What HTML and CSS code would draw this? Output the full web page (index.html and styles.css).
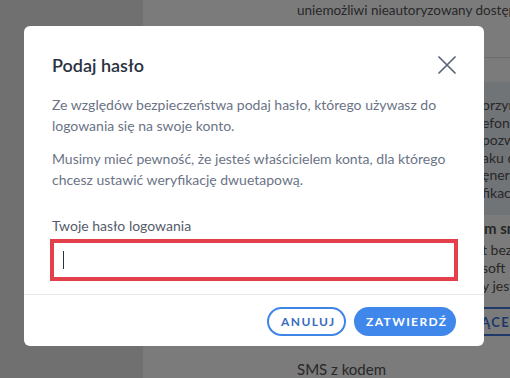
FILE: index.html
```html
<!DOCTYPE html>
<html lang="pl">
<head>
  <meta charset="UTF-8">
  <meta name="viewport" content="width=device-width, initial-scale=1">
  <title>Weryfikacja dwuetapowa</title>
  <link rel="stylesheet" href="styles.css">
</head>
<body>

  <div class="page">
    <aside class="sidebar"></aside>

    <main class="content">
      <div class="column">
        <p class="intro">uniemożliwi nieautoryzowany dostęp</p>
        <div class="section-line"></div>

        <div class="info-box">
          <p>orzyna</p>
          <p>efone</p>
          <p>pozwo</p>
          <p>aku d</p>
          <p>ęnero</p>
          <p>fikacji</p>
        </div>

        <h3 class="method-title">m sms</h3>
        <p class="method-text">t bezp</p>
        <p class="method-text">soft</p>
        <p class="method-text">y jest</p>
        <button class="outline-btn">ĄCEJ</button>

        <p class="sms-label">SMS z kodem</p>
      </div>
    </main>
  </div>

  <div class="overlay"></div>

  <div class="modal">
    <div class="modal-header">
      <h2>Podaj hasło</h2>
      <button class="close-btn" aria-label="Zamknij">
        <svg width="18" height="18" viewBox="0 0 18 18">
          <path d="M1 1 L17 17 M17 1 L1 17" stroke="#5a6377" stroke-width="1.7" fill="none" stroke-linecap="round"/>
        </svg>
      </button>
    </div>

    <div class="modal-body">
      <p>Ze względów bezpieczeństwa podaj hasło, którego używasz do logowania się na swoje konto.</p>
      <p>Musimy mieć pewność, że jesteś właścicielem konta, dla którego chcesz ustawić weryfikację dwuetapową.</p>

      <label for="password">Twoje hasło logowania</label>
      <div class="password-field">
        <input type="password" id="password">
        <span class="caret"></span>
      </div>
    </div>

    <div class="modal-footer">
      <button class="btn btn-secondary">Anuluj</button>
      <button class="btn btn-primary">Zatwierdź</button>
    </div>
  </div>

</body>
</html>
```

FILE: styles.css
```css
/* Global Styles */
body {
  margin: 0;
  width: 510px;
  height: 378px;
  overflow: hidden;
  font-family: Lato, "Liberation Sans", sans-serif;
  position: relative;
}

p {
  margin: 0;
}

/* Page behind the dialog */
.page {
  display: flex;
  height: 378px;
}

.sidebar {
  width: 143px;
  flex-shrink: 0;
  background-color: #e0e0e0;
}

.content {
  flex: 1;
  background-color: #f7f7f7;
  overflow: hidden;
}

.column {
  padding-left: 154px;
  width: 420px;
  color: #505050;
  font-size: 14px;
}

.intro {
  font-size: 13.5px;
  line-height: 20px;
  white-space: nowrap;
}

.section-line {
  margin-top: 37px;
  border-top: 1px solid #dcdcdc;
  margin-left: -154px;
}

.info-box {
  margin-top: 24px;
  margin-left: -154px;
  padding: 14px 0 14px 339px;
  background-color: #e3e8ef;
  font-size: 14px;
  line-height: 17.5px;
  white-space: nowrap;
}

.method-title {
  margin: 3px 0 3px 187px;
  font-size: 15px;
  font-weight: 700;
  line-height: 20px;
  white-space: nowrap;
}

.method-text {
  margin-left: 185px;
  line-height: 18px;
  white-space: nowrap;
}

.outline-btn {
  display: block;
  margin: 12px 0 0 170px;
  padding: 0 12px;
  height: 29px;
  border: 2px solid #3d70d0;
  border-radius: 3px;
  background: none;
  color: #3d70d0;
  font-family: inherit;
  font-size: 13px;
  font-weight: 700;
  letter-spacing: 1.5px;
}

.sms-label {
  margin-top: 23px;
  font-size: 15px;
  line-height: 20px;
}

.overlay {
  position: absolute;
  inset: 0;
  background-color: rgba(0, 0, 0, 0.5);
}

/* Dialog */
.modal {
  position: absolute;
  top: 26px;
  left: 24px;
  width: 460px;
  height: 320px;
  background-color: #fff;
  border-radius: 6px;
  display: flex;
  flex-direction: column;
  box-sizing: border-box;
}

.modal-header {
  display: flex;
  align-items: center;
  justify-content: space-between;
  padding: 27px 28px 0 28px;
}

.modal-header h2 {
  margin: 0;
  font-size: 18px;
  font-weight: 600;
  line-height: 24px;
  color: #2b3240;
}

.close-btn {
  padding: 0;
  border: none;
  background: none;
  cursor: pointer;
  display: flex;
}

.modal-body {
  padding: 17px 26px 13px 28px;
  font-size: 14px;
  color: #6b7386;
  line-height: 21px;
  border-bottom: 1px solid #e6e8ec;
}

.modal-body p + p {
  margin-top: 12px;
}

.modal-body label {
  display: block;
  margin-top: 26px;
  margin-bottom: 3px;
  color: #555c6b;
  line-height: 20px;
}

.password-field {
  position: relative;
  margin-left: -2px;
}

.password-field input {
  width: 100%;
  height: 42px;
  box-sizing: border-box;
  border: 4px solid #e4404c;
  padding: 0 12px;
  font-size: 14px;
  outline: none;
}

.caret {
  position: absolute;
  left: 13px;
  top: 12px;
  width: 1px;
  height: 18px;
  background-color: #2b3240;
}

.modal-footer {
  display: flex;
  justify-content: flex-end;
  gap: 8px;
  padding: 12px 28px 0 28px;
}

.btn {
  height: 29px;
  padding: 0 12px;
  border-radius: 15px;
  font-family: inherit;
  font-size: 12px;
  font-weight: 700;
  letter-spacing: 1.4px;
  text-transform: uppercase;
  cursor: pointer;
}

.btn-secondary {
  width: 79px;
  border: 2px solid #3d86e8;
  background-color: #fff;
  color: #3a6cbd;
}

.btn-primary {
  width: 102px;
  border: none;
  background-color: #3f87ea;
  color: #fff;
}
```
